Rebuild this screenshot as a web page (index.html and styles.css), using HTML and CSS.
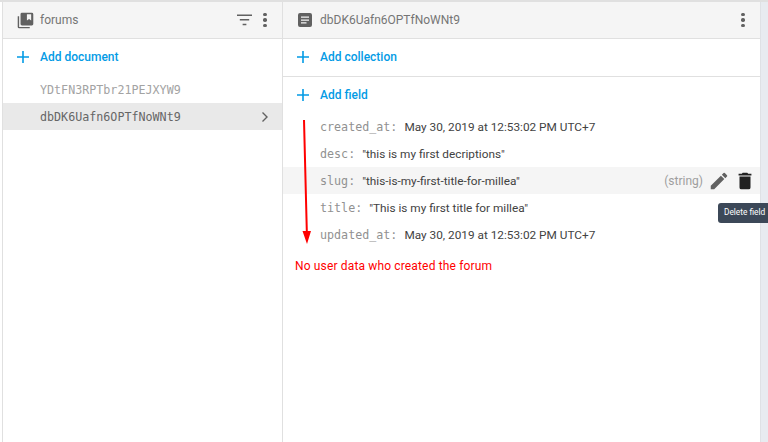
FILE: index.html
```html
<!DOCTYPE html>
<html lang="en">
<head>
<meta charset="utf-8">
<title>Firestore forums</title>
<link rel="stylesheet" href="styles.css">
</head>
<body>
<div class="app">
  <section class="panel panel-left">
    <header class="head">
      <svg class="head-icon" viewBox="0 0 24 24" width="17" height="17"><path fill="#616161" d="M3 6H1v15a2 2 0 0 0 2 2h15v-2H3V6zm18-5H7a2 2 0 0 0-2 2v14a2 2 0 0 0 2 2h14a2 2 0 0 0 2-2V3a2 2 0 0 0-2-2zm-1 11-3-2-3 2V3h6v9z"/></svg>
      <span class="head-title">forums</span>
      <svg class="filter" viewBox="0 0 16 12" width="15" height="12"><path fill="#616161" d="M0 0h16v1.6H0zM3 5h10v1.6H3zM6 10h4v1.6H6z"/></svg>
      <span class="dots"><i></i><i></i><i></i></span>
    </header>
    <div class="add add-doc">
      <svg class="plus" viewBox="0 0 12 12" width="12" height="12"><path fill="#039be5" d="M5.2 0h1.6v5.2H12v1.6H6.8V12H5.2V6.8H0V5.2h5.2z"/></svg>
      <span>Add document</span>
    </div>
    <ul class="docs">
      <li class="doc">YDtFN3RPTbr21PEJXYW9</li>
      <li class="doc doc-active">dbDK6Uafn6OPTfNoWNt9
        <svg class="chev" viewBox="0 0 8 12" width="8" height="12"><path fill="none" stroke="#616161" stroke-width="1.4" d="M1.5 1.5 6 6l-4.5 4.5"/></svg>
      </li>
    </ul>
  </section>
  <section class="panel panel-right">
    <header class="head">
      <svg class="head-icon doc-icon" viewBox="0 0 14 14" width="14" height="14"><path fill="#616161" fill-rule="evenodd" d="M2 0h10a2 2 0 0 1 2 2v10a2 2 0 0 1-2 2H2a2 2 0 0 1-2-2V2a2 2 0 0 1 2-2zm1 3.5v1.3h8V3.5zm0 2.9v1.3h8V6.4zm0 2.9v1.3h5.5V9.3z"/></svg>
      <span class="head-title">dbDK6Uafn6OPTfNoWNt9</span>
      <span class="dots"><i></i><i></i><i></i></span>
    </header>
    <div class="add add-coll">
      <svg class="plus" viewBox="0 0 12 12" width="12" height="12"><path fill="#039be5" d="M5.2 0h1.6v5.2H12v1.6H6.8V12H5.2V6.8H0V5.2h5.2z"/></svg>
      <span>Add collection</span>
    </div>
    <div class="add add-field">
      <svg class="plus" viewBox="0 0 12 12" width="12" height="12"><path fill="#039be5" d="M5.2 0h1.6v5.2H12v1.6H6.8V12H5.2V6.8H0V5.2h5.2z"/></svg>
      <span>Add field</span>
    </div>
    <div class="fields">
      <div class="field"><span class="key">created_at:</span><span class="val">May 30, 2019 at 12:53:02 PM UTC+7</span></div>
      <div class="field"><span class="key">desc:</span><span class="val">"this is my first decriptions"</span></div>
      <div class="field field-hover"><span class="key">slug:</span><span class="val">"this-is-my-first-title-for-millea"</span>
        <span class="type">(string)</span>
        <svg class="act" viewBox="0 0 24 24" width="22" height="22"><path fill="#616161" d="M3 17.25V21h3.75L17.81 9.94l-3.75-3.75L3 17.25zM20.71 7.04a1 1 0 0 0 0-1.41l-2.34-2.34a1 1 0 0 0-1.41 0l-1.83 1.83 3.75 3.75 1.83-1.83z"/></svg>
        <svg class="act" viewBox="0 0 24 24" width="22" height="22"><path fill="#212121" d="M6 19a2 2 0 0 0 2 2h8a2 2 0 0 0 2-2V7H6v12zM19 4h-3.5l-1-1h-5l-1 1H5v2h14V4z"/></svg>
      </div>
      <div class="field"><span class="key">title:</span><span class="val">"This is my first title for millea"</span></div>
      <div class="field"><span class="key">updated_at:</span><span class="val">May 30, 2019 at 12:53:02 PM UTC+7</span></div>
    </div>
    <p class="note">No user data who created the forum</p>
  </section>
  <div class="edge"></div>
</div>
<svg class="arrow" viewBox="0 0 12 124" width="12" height="124"><path fill="#f00" d="M3 0h2l2.800 111H11l-4 13-4.500-13h3.300z"/></svg>
<div class="tip">Delete field</div>
</body>
</html>
```
FILE: styles.css
```css
* { box-sizing: border-box; }
html, body { margin: 0; height: 100%; background: #fff; overflow: hidden; }
body { position: relative; font-family: Roboto, "Liberation Sans", sans-serif; color: #424242; }
.app { display: flex; height: 442px; padding: 2px 0 0 2px; background: #fff; }
.app::before { content: ""; position: absolute; left: 0; top: 0; width: 100%; height: 2px; background: #e0e0e0; }
.panel { display: flex; flex-direction: column; height: 440px; }
.panel-left { width: 281px; border-right: 1px solid #e0e0e0; border-left: 1px solid #e0e0e0; }
.panel-right { width: 477px; }
.edge { width: 8px; background: #e8ebf0; border-left: 1px solid #dfe1e5; }
.head { display: flex; align-items: center; height: 37px; flex: none; background: #f5f5f5; border-bottom: 1px solid #e0e0e0; padding-left: 14px; padding-right: 15px; }
.head-icon { flex: none; }
.head-title { margin-left: 6px; font-size: 12px; color: #757575; flex: 1; }
.panel-right .head-icon { margin-left: 1px; }
.panel-right .head-title { margin-left: 8px; }
.filter { margin-right: 11px; }
.dots { display: flex; flex-direction: column; gap: 2px; width: 4px; }
.dots i { display: block; width: 3.500px; height: 3.500px; border-radius: 50%; background: #616161; }
.add { display: flex; align-items: center; flex: none; font-size: 12px; font-weight: 500; color: #039be5; padding: 0 0 2px 14px; }
.add .plus { margin-right: 11px; flex: none; }
.add-doc { height: 37px; }
.add-coll { height: 38px; border-bottom: 1px solid #e0e0e0; }
.add-field { height: 36px; padding-bottom: 0; }
.docs { list-style: none; margin: 0; padding: 0; }
.doc { display: flex; align-items: center; justify-content: space-between; height: 27px; padding: 0 13px 0 37px; font-family: "DejaVu Sans Mono", monospace; font-size: 11.700px; color: #a3a3a3; }
.doc-active { background: #e9e9e9; color: #666; }
.fields { display: flex; flex-direction: column; }
.field { display: flex; align-items: center; height: 27px; padding-left: 37px; padding-right: 4px; font-size: 11.800px; }
.field-hover { background: #f5f5f5; }
.key { font-family: "DejaVu Sans Mono", monospace; font-size: 11.700px; color: #919191; margin-right: 7px; }
.val { color: #424242; }
.type { margin-left: auto; margin-right: 1px; color: #9e9e9e; font-size: 12px; }
.act { margin-left: 4px; flex: none; }
.note { margin: 11px 0 0 12px; font-size: 12px; color: #f00; letter-spacing: 0.15px; }
.arrow { position: absolute; left: 300px; top: 120px; }
.tip { position: absolute; left: 718px; top: 203px; width: 50px; height: 20px; padding: 4px 0 0 6px; background: #3c4858; color: #fff; font-size: 8.300px; white-space: nowrap; overflow: hidden; border-radius: 3px 0 0 3px; }
```
